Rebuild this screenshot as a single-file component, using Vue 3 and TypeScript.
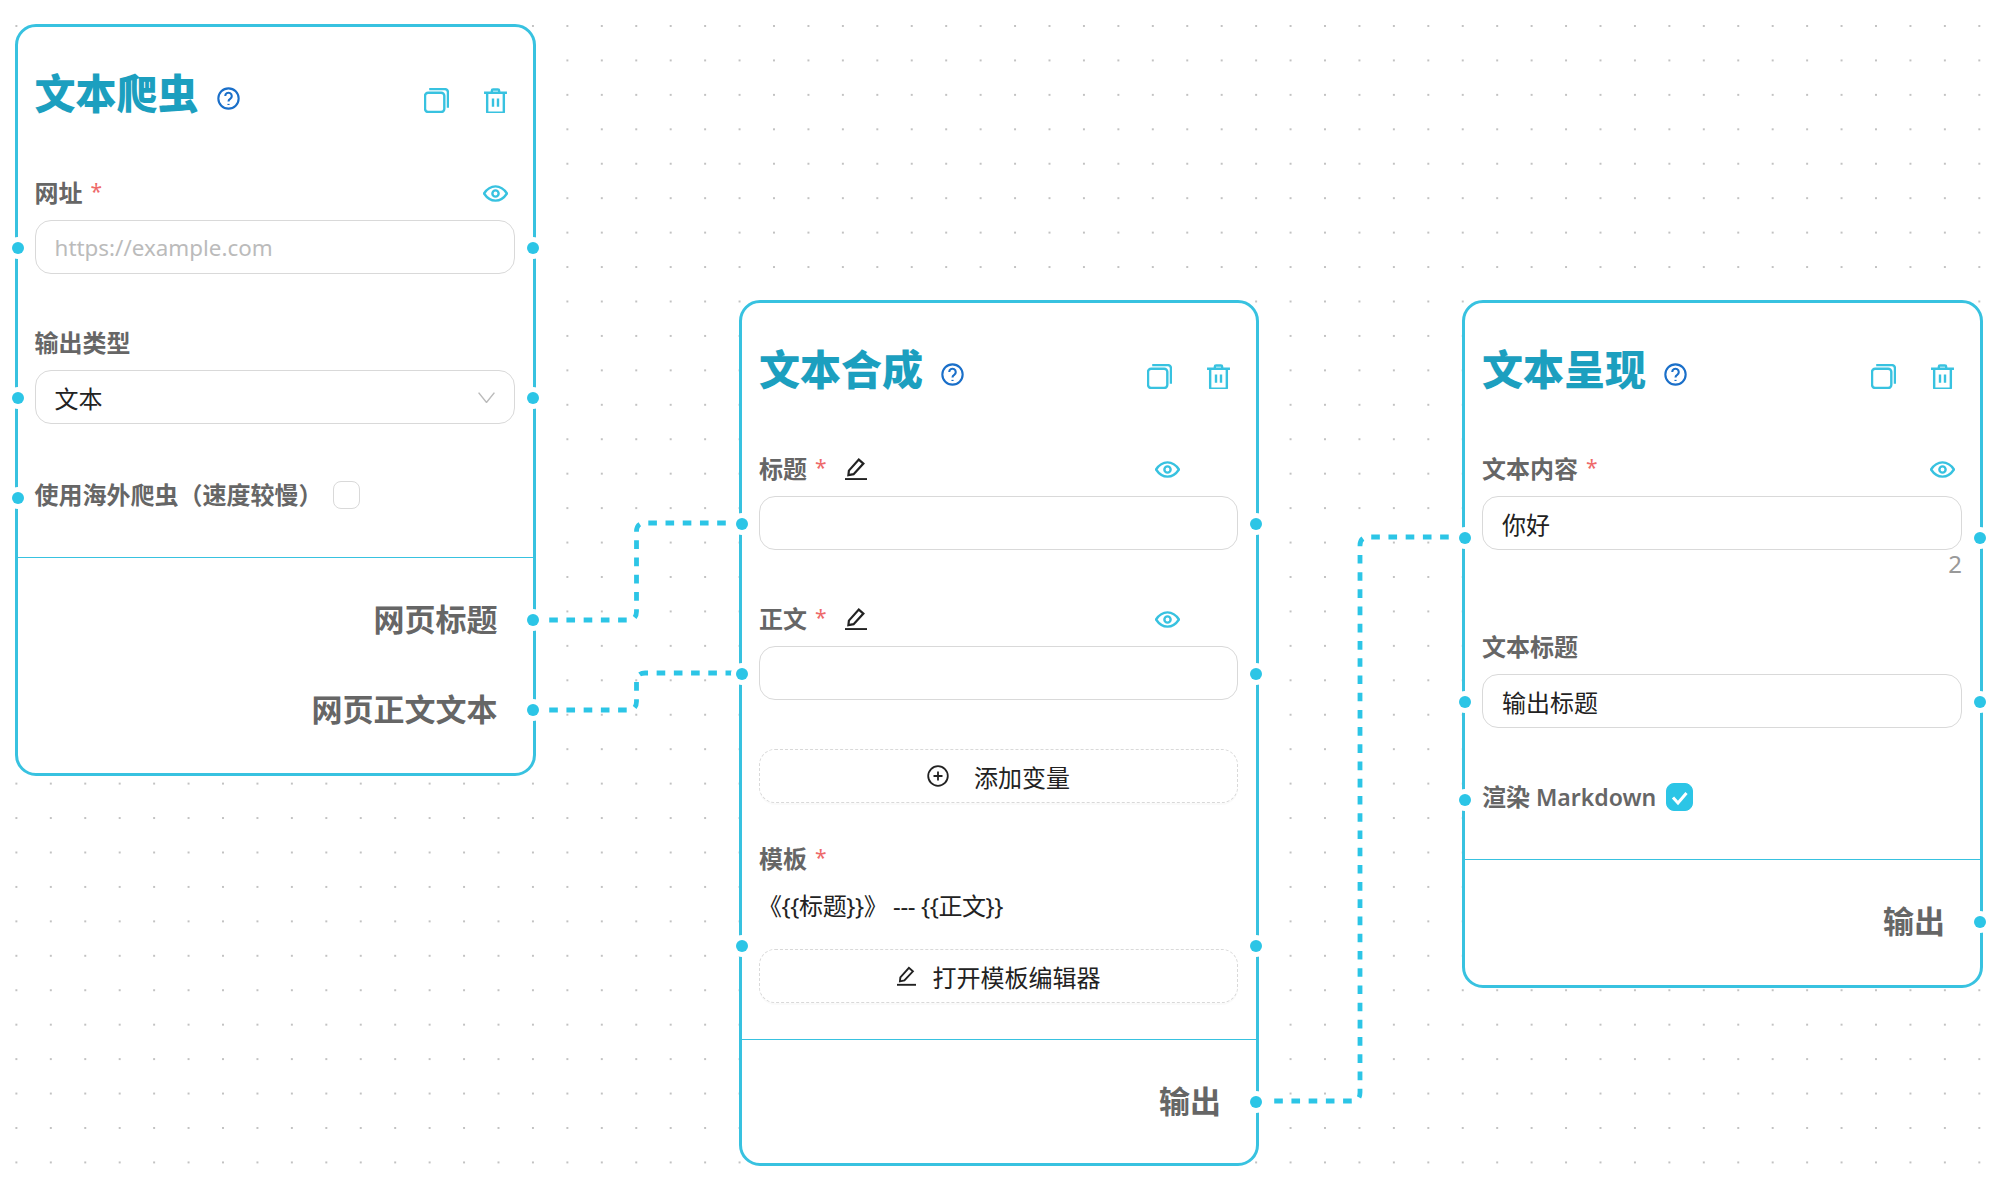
<script setup lang="ts">
type Field =
  | { kind: 'input'; label?: string; required?: boolean; value?: string; placeholder?: string; editable?: boolean; eye?: boolean; count?: string }
  | { kind: 'select'; label: string; value: string }
  | { kind: 'check'; label: string; latin?: string; checked: boolean }
  | { kind: 'add'; text: string }
  | { kind: 'template'; label: string; value: string; button: string }

interface FlowNode {
  title: string
  x: number
  y: number
  width: number
  height: number
  fields: Field[]
  outputs: string[]
}

const nodes: FlowNode[] = [
  {
    title: '文本爬虫',
    x: 14.6,
    y: 24,
    width: 521,
    height: 752,
    fields: [
      { kind: 'input', label: '网址', required: true, placeholder: 'https://example.com', eye: true },
      { kind: 'select', label: '输出类型', value: '文本' },
      { kind: 'check', label: '使用海外爬虫（速度较慢）', checked: false }
    ],
    outputs: ['网页标题', '网页正文文本']
  },
  {
    title: '文本合成',
    x: 739,
    y: 300,
    width: 520,
    height: 866,
    fields: [
      { kind: 'input', label: '标题', required: true, value: '', editable: true, eye: true },
      { kind: 'input', label: '正文', required: true, value: '', editable: true, eye: true },
      { kind: 'add', text: '添加变量' },
      { kind: 'template', label: '模板', value: '《{{标题}}》 --- {{正文}}', button: '打开模板编辑器' }
    ],
    outputs: ['输出']
  },
  {
    title: '文本呈现',
    x: 1462,
    y: 300,
    width: 521,
    height: 688,
    fields: [
      { kind: 'input', label: '文本内容', required: true, value: '你好', eye: true, count: '2' },
      { kind: 'input', label: '文本标题', value: '输出标题' },
      { kind: 'check', label: '渲染', latin: 'Markdown', checked: true }
    ],
    outputs: ['输出']
  }
]

// source x/y, x of the vertical run, target x/y
const edges: [number, number, number, number, number][] = [
  [532, 620, 636.5, 523, 741],
  [532, 710, 636.5, 673, 741],
  [1257, 1101, 1360, 537, 1465]
]

function edgePath([x1, y1, xm, y2, x2]: [number, number, number, number, number]) {
  const r = 8.6
  return `M${x1} ${y1}L${xm - r} ${y1}Q${xm} ${y1} ${xm} ${y1 - r}L${xm} ${y2 + r}Q${xm} ${y2} ${xm + r} ${y2}L${x2} ${y2}`
}
</script>

<template>
  <div class="canvas">
    <svg class="edges" width="2001" height="1187">
      <path v-for="(edge, i) in edges" :key="i" :d="edgePath(edge)" />
    </svg>

    <section
      v-for="node in nodes"
      :key="node.title"
      class="node"
      :style="{ left: node.x + 'px', top: node.y + 'px', width: node.width + 'px', height: node.height + 'px' }"
    >
      <header class="node-head">
        <h2 class="node-title">{{ node.title }}</h2>
        <svg class="help" viewBox="0 0 24 24" fill="none">
          <circle cx="12" cy="12" r="10.6" />
          <path d="M8.6 9.4a3.4 3.4 0 1 1 5.2 2.9c-1.2.8-1.8 1.4-1.8 2.7" />
          <path d="M12 17.600v1.200" />
        </svg>
        <div class="head-actions">
          <svg class="action" viewBox="0 0 24 24" fill="none">
            <rect x="1" y="4.5" width="18.5" height="18.5" rx="3" />
            <path d="M5 1h15a3 3 0 0 1 3 3v15" />
          </svg>
          <svg class="action" viewBox="0 0 24 24" fill="none">
            <path d="M1 4.5h22M8.5 4.5V2.6q0-1.2 1.2-1.2h4.6q1.2 0 1.200 1.200v1.900" />
            <path d="M4 4.500v18.200q0 1 1 1h14q1 0 1-1V4.500" />
            <path d="M9.600 10v8M14.400 10v8" />
          </svg>
        </div>
      </header>

      <div class="node-body">
        <template v-for="(field, i) in node.fields" :key="i">
          <div v-if="field.kind === 'input'" class="field">
            <div class="label-row">
              <span class="label">{{ field.label }}</span>
              <span v-if="field.required" class="star">*</span>
              <svg v-if="field.editable" class="pencil" viewBox="0 0 22 22" fill="none">
                <path d="M3.4 17.2l.5-4.6L13.800 1.600l4.600 4-9.800 10.600z" />
                <path d="M0 21.200h22" />
              </svg>
              <svg v-if="field.eye" class="eye" :class="{ shifted: field.editable }" viewBox="0 0 24 16" fill="none">
                <path d="M1 8q4.500-6.800 11-6.800T23 8q-4.500 6.800-11 6.800T1 8z" />
                <circle cx="12" cy="8" r="3" />
              </svg>
            </div>
            <div class="control">
              <i class="handle left" />
              <i class="handle right" />
              <div class="box">
                <span v-if="field.value">{{ field.value }}</span>
                <span v-else class="placeholder">{{ field.placeholder }}</span>
              </div>
              <div v-if="field.count" class="count">{{ field.count }}</div>
            </div>
          </div>

          <div v-else-if="field.kind === 'select'" class="field">
            <div class="label-row"><span class="label">{{ field.label }}</span></div>
            <div class="control">
              <i class="handle left" />
              <i class="handle right" />
              <div class="box select">
                <span>{{ field.value }}</span>
                <svg class="chevron" viewBox="0 0 17 11" fill="none"><path d="M.6.6l7.900 9.800L16.400.6" /></svg>
              </div>
            </div>
          </div>

          <div v-else-if="field.kind === 'check'" class="field check-row" :class="{ tight: field.latin }">
            <i class="handle left" />
            <span class="label">{{ field.label }}<span v-if="field.latin" class="latin">{{ field.latin }}</span></span>
            <span class="checkbox" :class="{ checked: field.checked }">
              <svg v-if="field.checked" viewBox="0 0 27 28" fill="none"><path d="M7 14.500l5 5.500 8.500-10" /></svg>
            </span>
          </div>

          <div v-else-if="field.kind === 'add'" class="field add-field">
            <button class="dashed add">
              <svg class="plus" viewBox="0 0 22 22" fill="none">
                <circle cx="11" cy="11" r="9.800" />
                <path d="M11 6.500v9M6.500 11h9" />
              </svg>
              {{ field.text }}
            </button>
          </div>

          <div v-else class="field template-field">
            <div class="label-row"><span class="label">{{ field.label }}</span><span class="star">*</span></div>
            <div class="control template-control">
              <i class="handle left" />
              <i class="handle right" />
              <div class="template-text">{{ field.value }}</div>
              <button class="dashed edit">
                <svg class="pencil small" viewBox="0 0 22 22" fill="none">
                  <path d="M3.400 17.200l.5-4.600L13.800 1.600l4.600 4-9.800 10.600z" />
                  <path d="M0 21.200h22" />
                </svg>
                {{ field.button }}
              </button>
            </div>
          </div>
        </template>
      </div>

      <footer class="node-foot">
        <div v-for="out in node.outputs" :key="out" class="output">
          {{ out }}
          <i class="handle out" />
        </div>
      </footer>
    </section>
  </div>
</template>

<style scoped>
.canvas {
  position: relative;
  width: 2001px;
  height: 1187px;
  overflow: hidden;
  background-color: #fff;
  background-image: radial-gradient(circle at 1px 1px, #c2c2c2 0.9px, transparent 1.2px);
  background-size: 34.44px 34.44px;
  background-position: 15.4px 25px;
  font-family: "Noto Sans", "Noto Sans CJK SC", sans-serif;
  color: #222;
}

.edges {
  position: absolute;
  left: 0;
  top: 0;
}

.edges path {
  fill: none;
  stroke: #2cc5e6;
  stroke-width: 4.8;
  stroke-dasharray: 8.61 8.61;
}

.node {
  position: absolute;
  box-sizing: border-box;
  background: #fff;
  border: 3px solid #38c2e0;
  border-radius: 21px;
}

.node-head {
  display: flex;
  align-items: center;
  height: 132px;
  margin-bottom: 16px;
  padding: 0 18px 0 17px;
}

.node-title {
  margin: 0;
  font-size: 41px;
  font-weight: 900;
  line-height: 1;
  color: #1c9fbf;
}

.help {
  flex: none;
  width: 23px;
  height: 23px;
  margin: 10px 0 0 18px;
  stroke: #1a6fc9;
  stroke-width: 2.2;
}

.head-actions {
  display: flex;
  gap: 34px;
  margin: 14px 7px 0 auto;
}

.action {
  width: 25px;
  height: 25px;
  stroke: #38c2e0;
  stroke-width: 2.3;
}

.node-body {
  display: flex;
  flex-direction: column;
  gap: 51px;
  padding: 0 18px 36px 17px;
}

.label-row {
  display: flex;
  align-items: center;
  height: 36px;
  margin-bottom: 9px;
}

.label {
  margin-bottom: 4px;
  font-size: 24px;
  font-weight: 700;
  color: #666;
  white-space: nowrap;
}

.latin {
  margin-left: 6px;
  font-size: 23px;
  font-weight: 600;
}

.star {
  margin: -4px 0 0 8px;
  font-size: 21px;
  color: #ee6a6a;
}

.pencil {
  width: 22px;
  height: 22px;
  margin-left: 18px;
  stroke: #222;
  stroke-width: 2.2;
}

.pencil.small {
  width: 19px;
  height: 20px;
  margin: 0;
}

.eye {
  width: 25px;
  height: 17px;
  margin: 0 7px 0 auto;
  stroke: #38c2e0;
  stroke-width: 2.3;
}

.eye.shifted {
  margin-right: 58px;
}

.control {
  position: relative;
}

.box {
  display: flex;
  align-items: center;
  box-sizing: border-box;
  height: 54px;
  padding: 0 19px;
  border: 1px solid #d9d9d9;
  border-radius: 16px;
  background: #fff;
  font-size: 24px;
}

.placeholder {
  font-size: 22.4px;
  color: #bbb;
}

.select {
  justify-content: space-between;
}

.chevron {
  width: 17px;
  height: 11px;
  stroke: #bbb;
  stroke-width: 1.5;
}

.count {
  height: 28px;
  font-size: 24px;
  line-height: 28px;
  text-align: right;
  color: #999;
}

.check-row {
  position: relative;
  display: flex;
  align-items: center;
  gap: 10px;
  height: 40px;
  margin-bottom: 6px;
}

.check-row.tight {
  margin-top: -2px;
}

.checkbox {
  box-sizing: border-box;
  width: 27px;
  height: 28px;
  border: 1px solid #d9d9d9;
  border-radius: 8px;
}

.checkbox.checked {
  border-color: #2cc5e6;
  background: #2cc5e6;
}

.checkbox svg {
  display: block;
  width: 27px;
  height: 28px;
  margin: -1px;
  stroke: #fff;
  stroke-width: 3;
}

.add-field {
  margin-top: -2px;
}

.template-field {
  margin-top: -13px;
}

.dashed {
  display: flex;
  align-items: center;
  justify-content: center;
  box-sizing: border-box;
  width: 100%;
  height: 54px;
  padding: 0;
  border: 1px dashed #d9d9d9;
  border-radius: 16px;
  background: #fff;
  box-shadow: 0 2px 0 rgba(0, 0, 0, 0.02);
  font: inherit;
  font-size: 24px;
  color: #222;
}

.add {
  gap: 25px;
}

.edit {
  gap: 17px;
}

.plus {
  width: 22px;
  height: 22px;
  stroke: #222;
  stroke-width: 1.8;
}

.template-text {
  height: 42px;
  margin: 0 0 21px -1px;
  font-size: 24px;
  letter-spacing: -0.4px;
  line-height: 40px;
  white-space: pre;
}

.node-foot {
  padding: 17px 0;
  border-top: 1.5px solid #38c2e0;
}

.output {
  position: relative;
  height: 90px;
  padding-right: 35px;
  font-size: 31px;
  font-weight: 700;
  line-height: 88px;
  text-align: right;
  color: #666;
}

.handle {
  position: absolute;
  top: calc(50% + 1px);
  width: 12px;
  height: 12px;
  border-radius: 50%;
  background: #2cc5e6;
  box-shadow: 0 0 0 5px #fff;
  transform: translateY(-50%);
}

.handle.left {
  left: -23px;
}

.handle.right {
  right: -24px;
}

.handle.out {
  top: 50%;
  right: -6px;
}

.check-row .handle {
  top: calc(50% + 3px);
}
</style>

<style>
html,
body {
  margin: 0;
  overflow: hidden;
}
</style>
